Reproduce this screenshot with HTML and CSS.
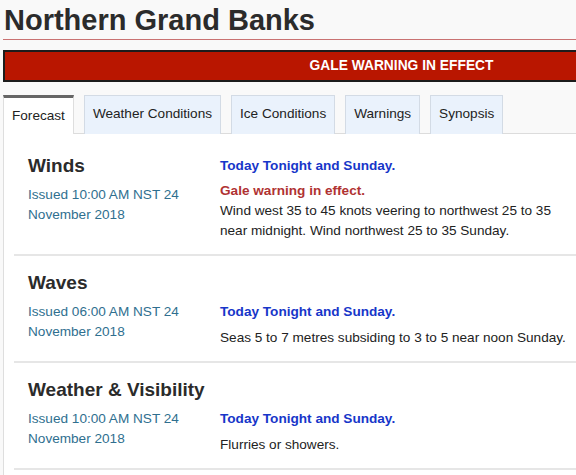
FILE: index.html
```html
<!DOCTYPE html>
<html>
  <head>
    <link rel="stylesheet" href="styles.css">
  </head>
  <body>
    <div class="page">
      <h1 class="title">Northern Grand Banks</h1>
      <div class="alert">GALE WARNING IN EFFECT</div>
      <ul class="tabs">
        <li class="tab active">Forecast</li>
        <li class="tab">Weather Conditions</li>
        <li class="tab">Ice Conditions</li>
        <li class="tab">Warnings</li>
        <li class="tab">Synopsis</li>
      </ul>
      <div class="panel">
        <div class="row">
          <div class="meta">
            <h2 class="row-title">Winds</h2>
            <div class="issued">Issued 10:00 AM NST 24<br />November 2018</div>
          </div>
          <div class="forecast top">
            <p class="period">Today Tonight and Sunday.</p>
            <p class="text"><span class="warn">Gale warning in effect.</span><br />Wind west 35 to 45 knots veering to northwest 25 to 35 near midnight. Wind northwest 25 to 35 Sunday.</p>
          </div>
        </div>
        <div class="row">
          <div class="meta">
            <h2 class="row-title">Waves</h2>
            <div class="issued">Issued 06:00 AM NST 24<br />November 2018</div>
          </div>
          <div class="forecast">
            <p class="period">Today Tonight and Sunday.</p>
            <p class="text">Seas 5 to 7 metres subsiding to 3 to 5 near noon Sunday.</p>
          </div>
        </div>
        <div class="row">
          <div class="meta">
            <h2 class="row-title">Weather &amp; Visibility</h2>
            <div class="issued">Issued 10:00 AM NST 24<br />November 2018</div>
          </div>
          <div class="forecast">
            <p class="period">Today Tonight and Sunday.</p>
            <p class="text">Flurries or showers.</p>
          </div>
        </div>
      </div>
    </div>
  </body>
</html>
```
FILE: styles.css
```css
* {
  margin: 0;
  padding: 0;
  box-sizing: border-box;
}

body {
  font-family: "Liberation Sans", Arial, sans-serif;
  font-size: 13.6px;
  color: #222;
  background: #f9f9f9;
  overflow: hidden;
}

.page {
  width: 800px;
  padding-left: 3px;
}

.title {
  font-size: 29px;
  font-weight: bold;
  line-height: 34px;
  color: #2b2b2b;
  padding: 3px 0 2px 1px;
  border-bottom: 1px solid #c97272;
}

.alert {
  margin-top: 10px;
  height: 32px;
  line-height: 28px;
  text-align: center;
  background: #b91600;
  border: 2px solid #1c1c1c;
  color: #fff;
  font-weight: bold;
  font-size: 13.8px;
}

.tabs {
  list-style: none;
  display: flex;
  gap: 10px;
  margin-top: 13px;
  border-bottom: 1px solid #dcdcdc;
  height: 39px;
}

.tab {
  height: 39px;
  padding: 0 8px;
  line-height: 36px;
  background: #eaf2fc;
  border: 1px solid #d3dbe5;
  border-bottom: none;
  color: #222;
}

.tab.active {
  background: #fff;
  border: 1px solid #dedede;
  border-top: 3px solid #666;
  border-bottom: none;
  line-height: 35px;
}

.panel {
  background: #fff;
  border-left: 1px solid #dedede;
  padding-top: 5px;
  min-height: 400px;
}

.row {
  margin-left: 10px;
  padding: 15px 0 13px 14px;
  border-bottom: 2px solid #e6e6e6;
  display: flex;
  align-items: flex-start;
}

.meta {
  width: 192px;
  flex-shrink: 0;
}

.row-title {
  font-size: 19px;
  line-height: 24px;
  color: #2b2b2b;
  margin-bottom: 7px;
}

.issued {
  color: #2f6f8f;
  line-height: 20px;
}

.forecast {
  width: 360px;
  line-height: 20px;
  margin-top: 31px;
}

.forecast.top {
  margin-top: 2px;
}

.period {
  color: #1736c9;
  font-weight: bold;
  margin-bottom: 6px;
}

.top .period {
  margin-bottom: 5px;
}

.warn {
  color: #b03232;
  font-weight: bold;
}
```
